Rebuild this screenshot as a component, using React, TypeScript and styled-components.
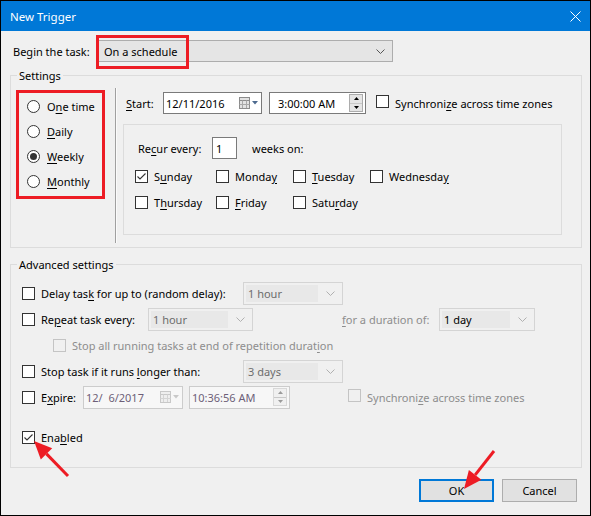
import styled, { createGlobalStyle } from "styled-components"

const GlobalStyle = createGlobalStyle`
  html, body {
    margin: 0;
    padding: 0;
    background: #ffffff;
  }
  * {
    box-sizing: border-box;
  }
`

const Window = styled.div`
  position: relative;
  width: 591px;
  height: 516px;
  border: 1px solid #000;
  background: #f0f0f0;
  font-family: "Noto Sans", "Open Sans", sans-serif;
  font-size: 11px;
  color: #000;
  overflow: hidden;
`

const TitleBar = styled.div`
  height: 30px;
  background: #0078d7;
  color: #fff;
  font-size: 11.5px;
  display: flex;
  align-items: center;
  justify-content: space-between;
  padding: 0 9px 0 9px;
`

const Body = styled.div`
  display: flex;
  flex-direction: column;
  padding: 9px 8px 0 9px;
`

const Row = styled.div<{ $h?: number; $pl?: number; $mt?: number }>`
  display: flex;
  align-items: center;
  height: ${({ $h }) => $h ?? 26}px;
  padding-left: ${({ $pl }) => $pl ?? 0}px;
  margin-top: ${({ $mt }) => $mt ?? 0}px;
  white-space: nowrap;
`

const Label = styled.span<{ $w?: number; $ml?: number; $off?: boolean }>`
  display: inline-block;
  width: ${({ $w }) => ($w ? `${$w}px` : "auto")};
  flex: none;
  margin-left: ${({ $ml }) => $ml ?? 0}px;
  color: ${({ $off }) => ($off ? "#8d8d8d" : "#000")};
  white-space: nowrap;
`

const U = styled.span`
  text-decoration: underline;
  text-underline-offset: 2px;
`

const Combo = styled.div<{ $w: number; $h?: number }>`
  width: ${({ $w }) => $w}px;
  height: ${({ $h }) => $h ?? 22}px;
  flex: none;
  border: 1px solid #adadad;
  background: #e5e5e5;
  display: flex;
  align-items: center;
  justify-content: space-between;
  padding: 0 7px 0 6px;
`

const FlatCombo = styled.div<{ $w: number; $ml?: number; $off?: boolean }>`
  width: ${({ $w }) => $w}px;
  height: 23px;
  flex: none;
  margin-left: ${({ $ml }) => $ml ?? 0}px;
  border: 1px solid #d4d4d4;
  background: #f0f0f0;
  display: flex;
  align-items: center;
  justify-content: space-between;
  padding: 2px 7px 2px 2px;
  color: ${({ $off }) => ($off ? "#6d6d6d" : "#000")};
`

const ComboText = styled.span`
  flex: 1;
  height: 100%;
  background: #e8e8e8;
  margin-right: 8px;
  padding-left: 2px;
  display: flex;
  align-items: center;
`

const Group = styled.fieldset<{ $mt: number }>`
  margin: ${({ $mt }) => $mt}px 0 0 0;
  padding: 0;
  border: 1px solid #dcdcdc;
  min-width: 0;
`

const GroupTitle = styled.legend`
  margin-left: 6px;
  padding: 0 2px;
  line-height: 17px;
`

const SettingsContent = styled.div`
  display: flex;
  padding: 4px 0 4px 0;
`

const RadioColumn = styled.div`
  width: 104px;
  flex: none;
  padding: 6px 0 0 16px;
`

const RadioRow = styled.div`
  display: flex;
  align-items: center;
  gap: 7px;
  height: 25px;
`

const RadioDot = styled.span<{ $on?: boolean }>`
  width: 13px;
  height: 13px;
  flex: none;
  border: 1px solid #333;
  border-radius: 50%;
  background: #fff;
  display: flex;
  align-items: center;
  justify-content: center;

  &::after {
    content: "";
    display: ${({ $on }) => ($on ? "block" : "none")};
    width: 7px;
    height: 7px;
    border-radius: 50%;
    background: #333;
  }
`

const Separator = styled.div`
  width: 2px;
  height: 155px;
  flex: none;
  border-left: 1px solid #a0a0a0;
  border-right: 1px solid #fbfbfb;
`

const RightColumn = styled.div`
  display: flex;
  flex-direction: column;
  padding: 4px 0 0 6px;
`

const FieldBox = styled.div<{ $w: number; $h?: number; $ml?: number; $pl?: number; $off?: boolean }>`
  width: ${({ $w }) => $w}px;
  height: ${({ $h }) => $h ?? 22}px;
  flex: none;
  margin-left: ${({ $ml }) => $ml ?? 0}px;
  padding: 0 2px 0 ${({ $pl }) => $pl ?? 2}px;
  border: 1px solid ${({ $off }) => ($off ? "#cccccc" : "#7a7a7a")};
  background: ${({ $off }) => ($off ? "#f7f7f7" : "#fff")};
  color: ${({ $off }) => ($off ? "#6d5f78" : "#000")};
  display: flex;
  align-items: center;
  justify-content: space-between;
`

const Spinner = styled.div<{ $off?: boolean }>`
  width: 14px;
  height: 18px;
  display: flex;
  flex-direction: column;
  border: 1px solid ${({ $off }) => ($off ? "#d8d8d8" : "#acacac")};
  background: ${({ $off }) => ($off ? "#f0f0f0" : "#e5e5e5")};
`

const SpinHalf = styled.div`
  flex: 1;
  display: flex;
  align-items: center;
  justify-content: center;
  & + & {
    border-top: 1px solid #c8c8c8;
  }
`

const RecurBox = styled.div`
  margin-top: 10px;
  width: 439px;
  height: 111px;
  border: 1px solid #dcdcdc;
  padding: 12px 0 0 11px;
`

const DayGrid = styled.div`
  margin-top: 4px;
  display: grid;
  grid-template-columns: 81px 77px 77px auto;
  grid-auto-rows: 26px;
`

const Day = styled.div`
  display: flex;
  align-items: center;
  gap: 6px;
`

const Box = styled.span<{ $off?: boolean }>`
  width: 13px;
  height: 13px;
  flex: none;
  border: 1px solid ${({ $off }) => ($off ? "#c4c4c4" : "#333")};
  background: ${({ $off }) => ($off ? "#f0f0f0" : "#fff")};
  display: inline-flex;
  align-items: center;
  justify-content: center;
`

const AdvancedContent = styled.div`
  padding: 7px 0 17px 11px;
`

const ButtonRow = styled.div`
  display: flex;
  justify-content: flex-end;
  gap: 8px;
  margin-top: 11px;
  padding-right: 5px;
`

const Button = styled.button<{ $primary?: boolean }>`
  width: 75px;
  height: 23px;
  padding: 0;
  font-family: inherit;
  font-size: 11px;
  color: #000;
  background: #e1e1e1;
  border: ${({ $primary }) => ($primary ? "2px solid #0078d7" : "1px solid #adadad")};
`

const Overlay = styled.svg`
  position: absolute;
  top: -1px;
  left: -1px;
  width: 591px;
  height: 516px;
  pointer-events: none;
`

const Chevron = ({ color = "#555" }: { color?: string }) => (
  <svg width="9" height="5" viewBox="0 0 9 5">
    <polyline points="0.5,0.5 4.5,4.5 8.5,0.5" fill="none" stroke={color} strokeWidth="1" />
  </svg>
)

const Calendar = ({ off }: { off?: boolean }) => (
  <svg width="20" height="12" viewBox="0 0 20 12">
    <rect x="0.5" y="0.5" width="10" height="11" fill={off ? "#eeeeee" : "#e2e2e2"} stroke={off ? "#c8c8c8" : "#8c8c8c"} />
    <line x1="0.5" y1="3.5" x2="10.5" y2="3.5" stroke={off ? "#c8c8c8" : "#8c8c8c"} />
    <line x1="3.5" y1="3.5" x2="3.5" y2="11" stroke={off ? "#d4d4d4" : "#a8a8a8"} />
    <line x1="7.5" y1="3.5" x2="7.5" y2="11" stroke={off ? "#d4d4d4" : "#a8a8a8"} />
    <line x1="0.5" y1="7.5" x2="10.5" y2="7.5" stroke={off ? "#d4d4d4" : "#a8a8a8"} />
    <polygon points="13,4 19,4 16,7.5" fill={off ? "#c8c8c8" : "#4d6a8f"} />
  </svg>
)

const Spin = ({ off }: { off?: boolean }) => (
  <Spinner $off={off}>
    <SpinHalf>
      <svg width="5" height="3" viewBox="0 0 5 3">
        <polygon points="0,3 5,3 2.5,0" fill={off ? "#9a9a9a" : "#000"} />
      </svg>
    </SpinHalf>
    <SpinHalf>
      <svg width="5" height="3" viewBox="0 0 5 3">
        <polygon points="0,0 5,0 2.5,3" fill={off ? "#9a9a9a" : "#000"} />
      </svg>
    </SpinHalf>
  </Spinner>
)

const Check = ({ checked, off }: { checked?: boolean; off?: boolean }) => (
  <Box $off={off}>
    {checked && (
      <svg width="11" height="11" viewBox="0 0 11 11">
        <polyline points="1.5,5.5 4,8 9.5,2.5" fill="none" stroke="#333" strokeWidth="1.1" />
      </svg>
    )}
  </Box>
)

const CloseIcon = () => (
  <svg width="11" height="11" viewBox="0 0 11 11">
    <line x1="0.5" y1="0.5" x2="10.5" y2="10.5" stroke="#fff" strokeWidth="1" />
    <line x1="10.5" y1="0.5" x2="0.5" y2="10.5" stroke="#fff" strokeWidth="1" />
  </svg>
)

const App = () => {
  return (
    <>
      <GlobalStyle />
      <Window>
        <TitleBar>
          <span>New Trigger</span>
          <CloseIcon />
        </TitleBar>
        <Body>
          <Row $h={22}>
            <Label $w={84} $ml={3}>Be<U>g</U>in the task:</Label>
            <Combo $w={296}>
              <span>On a schedule</span>
              <Chevron />
            </Combo>
          </Row>

          <Group $mt={5}>
            <GroupTitle>Settings</GroupTitle>
            <SettingsContent>
              <RadioColumn>
                <RadioRow><RadioDot /><span>O<U>n</U>e time</span></RadioRow>
                <RadioRow><RadioDot /><span><U>D</U>aily</span></RadioRow>
                <RadioRow><RadioDot $on /><span><U>W</U>eekly</span></RadioRow>
                <RadioRow><RadioDot /><span><U>M</U>onthly</span></RadioRow>
              </RadioColumn>
              <Separator />
              <RightColumn>
                <Row $h={22} $pl={3}>
                  <Label $w={37}><U>S</U>tart:</Label>
                  <FieldBox $w={99}>
                    <span>12/11/2016</span>
                    <Calendar />
                  </FieldBox>
                  <FieldBox $w={97} $ml={7} $pl={8}>
                    <span>3:00:00 AM</span>
                    <Spin />
                  </FieldBox>
                  <Label $ml={10}><Check /></Label>
                  <Label $ml={6}>Synchroni<U>z</U>e across time zones</Label>
                </Row>
                <RecurBox>
                  <Row $h={22} $pl={3}>
                    <Label $w={74}>Re<U>c</U>ur every:</Label>
                    <FieldBox $w={25} $pl={3}>1</FieldBox>
                    <Label $ml={15}>weeks on:</Label>
                  </Row>
                  <DayGrid>
                    <Day><Check checked /><span>S<U>u</U>nday</span></Day>
                    <Day><Check /><span>Monda<U>y</U></span></Day>
                    <Day><Check /><span><U>T</U>uesday</span></Day>
                    <Day><Check /><span>Wednesda<U>y</U></span></Day>
                    <Day><Check /><span>T<U>h</U>ursday</span></Day>
                    <Day><Check /><span><U>F</U>riday</span></Day>
                    <Day><Check /><span>Satu<U>r</U>day</span></Day>
                  </DayGrid>
                </RecurBox>
              </RightColumn>
            </SettingsContent>
          </Group>

          <Group $mt={8}>
            <GroupTitle>Advanced settings</GroupTitle>
            <AdvancedContent>
              <Row>
                <Check />
                <Label $w={202} $ml={6}>Delay tas<U>k</U> for up to (random delay):</Label>
                <FlatCombo $w={100} $off>
                  <ComboText>1 hour</ComboText>
                  <Chevron color="#b0b0b0" />
                </FlatCombo>
              </Row>
              <Row>
                <Check />
                <Label $w={107} $ml={6}>Re<U>p</U>eat task every:</Label>
                <FlatCombo $w={105} $off>
                  <ComboText>1 hour</ComboText>
                  <Chevron color="#b0b0b0" />
                </FlatCombo>
                <Label $w={97} $ml={89} $off><U>f</U>or a duration of:</Label>
                <FlatCombo $w={96}>
                  <ComboText>1 day</ComboText>
                  <Chevron color="#b0b0b0" />
                </FlatCombo>
              </Row>
              <Row $pl={31}>
                <Check off />
                <Label $ml={6} $off>Stop all running tasks at end of repetition durat<U>i</U>on</Label>
              </Row>
              <Row>
                <Check />
                <Label $w={202} $ml={6}>Stop task if it runs <U>l</U>onger than:</Label>
                <FlatCombo $w={100} $off>
                  <ComboText>3 days</ComboText>
                  <Chevron color="#b0b0b0" />
                </FlatCombo>
              </Row>
              <Row>
                <Check />
                <Label $w={42} $ml={6}>E<U>x</U>pire:</Label>
                <FieldBox $w={100} $h={23} $off>
                  <span>12/&nbsp;&nbsp;6/2017</span>
                  <Calendar off />
                </FieldBox>
                <FieldBox $w={101} $h={23} $ml={6} $off>
                  <span>10:36:56 AM</span>
                  <Spin off />
                </FieldBox>
                <Label $ml={58}><Check off /></Label>
                <Label $ml={6} $off>Synchroni<U>z</U>e across time zones</Label>
              </Row>
              <Row $mt={14}>
                <Check checked />
                <Label $ml={6}>Ena<U>b</U>led</Label>
              </Row>
            </AdvancedContent>
          </Group>

          <ButtonRow>
            <Button $primary>OK</Button>
            <Button>Cancel</Button>
          </ButtonRow>
        </Body>

        <Overlay viewBox="0 0 591 516">
          <g fill="none" stroke="#ed1c24" strokeWidth="3">
            <rect x="97.5" y="36.5" width="90" height="31" />
            <rect x="17.5" y="91.5" width="86" height="106" />
            <line x1="68" y1="476" x2="46.5" y2="453.9" />
            <line x1="494" y1="451" x2="475.2" y2="474.9" />
          </g>
          <g fill="#ed1c24">
            <polygon points="34,441 52.2,448.3 40.8,459.5" />
            <polygon points="464,489 481.4,479.8 468.9,469.9" />
          </g>
        </Overlay>
      </Window>
    </>
  )
}

export default App
